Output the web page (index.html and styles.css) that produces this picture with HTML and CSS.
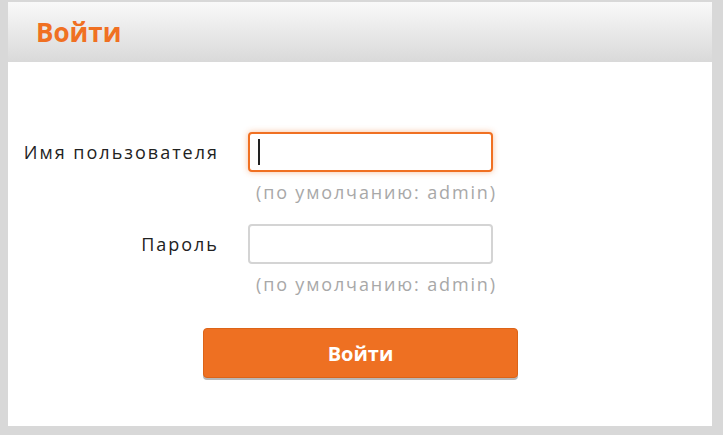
FILE: index.html
```html
<!DOCTYPE html>
<html lang="ru">
<head>
    <meta charset="UTF-8">
    <title>Войти</title>
    <link rel="stylesheet" href="styles.css">
</head>
<body>

    <div class="panel">
        <div class="panel-header">
            <h1>Войти</h1>
        </div>
        <form class="login-form">
            <div class="field">
                <label for="username">Имя пользователя</label>
                <div class="input-wrap">
                    <input type="text" id="username" class="focused">
                    <span class="caret"></span>
                </div>
                <div class="hint">(по умолчанию: admin)</div>
            </div>
            <div class="field">
                <label for="password">Пароль</label>
                <div class="input-wrap">
                    <input type="password" id="password">
                </div>
                <div class="hint">(по умолчанию: admin)</div>
            </div>
            <div class="actions">
                <button type="button" class="login-button">Войти</button>
            </div>
        </form>
    </div>

</body>
</html>
```

FILE: styles.css
```css
body {
    margin: 0;
    background-color: #d8d8d8;
    font-family: "Open Sans", "Liberation Sans", sans-serif;
    color: #222;
}
.panel {
    margin: 2px 11px 0 8px;
    height: 424px;
    background-color: #ffffff;
}
.panel-header {
    height: 60px;
    padding-left: 28px;
    display: flex;
    align-items: center;
    background: linear-gradient(to bottom, #f9f9f9, #d9d9d9);
}
.panel-header h1 {
    margin: 0;
    font-size: 26px;
    font-weight: bold;
    color: #f07022;
}
.login-form {
    padding-top: 70px;
}
.field {
    display: grid;
    grid-template-columns: 211px 245px;
    column-gap: 29px;
    align-items: center;
    margin-bottom: 20px;
}
.field label {
    text-align: right;
    font-size: 18px;
    letter-spacing: 2px;
    white-space: nowrap;
}
.input-wrap {
    position: relative;
}
.input-wrap input {
    box-sizing: border-box;
    width: 245px;
    height: 40px;
    border: 2px solid #d4d4d4;
    border-radius: 4px;
    padding: 0 8px;
    outline: none;
    font-size: 18px;
}
.input-wrap input.focused {
    border-color: #f07022;
    box-shadow: 0 0 6px rgba(240, 112, 34, 0.45);
}
.caret {
    position: absolute;
    left: 10px;
    top: 7px;
    width: 2px;
    height: 26px;
    background-color: #222;
}
.hint {
    grid-column: 2;
    padding-left: 8px;
    padding-top: 8px;
    line-height: 24px;
    font-size: 18px;
    letter-spacing: 1.85px;
    white-space: nowrap;
    color: #a8a8a8;
}
.actions {
    padding-left: 195px;
    padding-top: 12px;
}
.login-button {
    width: 315px;
    height: 50px;
    border: 1px solid #dc6418;
    border-radius: 4px;
    background-color: #ee7022;
    color: #ffffff;
    font-family: inherit;
    font-size: 20px;
    font-weight: bold;
    box-shadow: 0 2px 0 #b8b8b8;
    cursor: pointer;
}
```
